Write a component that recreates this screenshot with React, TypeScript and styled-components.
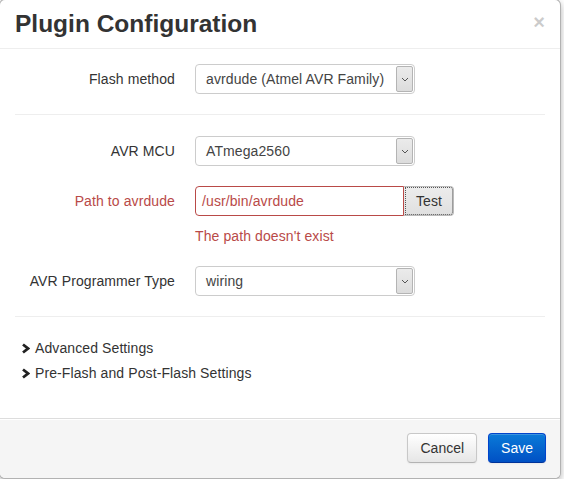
import React from "react";
import styled, { createGlobalStyle } from "styled-components";

const Global = createGlobalStyle`
  html, body { margin: 0; padding: 0; background: #ffffff; }
  body { font-family: "Liberation Sans", Arial, sans-serif; font-size: 14px; line-height: 20px; color: #333; }
  * { box-sizing: border-box; }
`;

const Modal = styled.div`
  width: 562px;
  margin-left: -1px;
  margin-top: -1px;
  background: #fff;
  border: 1px solid rgba(0, 0, 0, 0.3);
  border-radius: 6px;
  box-shadow: 0 3px 7px rgba(0, 0, 0, 0.3);
  overflow: hidden;
`;

const Header = styled.div`
  display: flex;
  justify-content: space-between;
  align-items: flex-start;
  padding: 4px 15px 4px;
  border-bottom: 1px solid #eee;
`;

const Title = styled.h3`
  margin: 0;
  font-size: 24.5px;
  line-height: 40px;
  font-weight: bold;
  color: #333;
`;

const Close = styled.span`
  margin-top: 8px;
  font-size: 20px;
  line-height: 20px;
  font-weight: bold;
  color: #000;
  opacity: 0.2;
`;

const Body = styled.div`
  display: flex;
  flex-direction: column;
  padding: 15px 15px 35px;
  letter-spacing: 0.1px;
`;

const Group = styled.div`
  display: grid;
  grid-template-columns: 160px 1fr;
  column-gap: 20px;
  margin-bottom: 20px;
`;

const Label = styled.label<{ $error?: boolean }>`
  padding-top: 5px;
  text-align: right;
  color: ${(p) => (p.$error ? "#b94a48" : "#333")};
`;

const Controls = styled.div`
  display: flex;
  flex-direction: column;
  align-items: flex-start;
`;

const Select = styled.div`
  width: 220px;
  height: 30px;
  display: flex;
  align-items: center;
  justify-content: space-between;
  border: 1px solid #ccc;
  border-radius: 4px;
  background: #fff;
  padding: 1px 1px 1px 10px;
  color: #444;
`;

const Arrow = styled.span`
  width: 17px;
  height: 100%;
  display: flex;
  align-items: center;
  justify-content: center;
  background: linear-gradient(#ebebeb, #dcdcdc);
  border: 1px solid #b4b4b4;
  border-radius: 2px;
`;

const Append = styled.div`
  display: flex;
`;

const Input = styled.div`
  width: 209px;
  height: 30px;
  padding: 4px 6px;
  border: 1px solid #b94a48;
  border-radius: 4px 0 0 4px;
  color: #b94a48;
  background: #fff;
`;

const AddonBtn = styled.div`
  width: 50px;
  height: 30px;
  display: flex;
  align-items: center;
  justify-content: center;
  padding-left: 1px;
  background: linear-gradient(#ececec, #e0e0e0);
  border: 1px solid #bbb;
  border-left: none;
  border-radius: 0 4px 4px 0;
  outline: 1px dotted #555;
  outline-offset: -2px;
  color: #333;
`;

const Help = styled.span`
  margin-top: 10px;
  color: #b94a48;
`;

const Hr = styled.hr`
  width: 100%;
  margin: 0 0 20px;
  border: 0;
  border-top: 1px solid #eee;
  border-bottom: 1px solid #fff;
`;

const Toggle = styled.div`
  display: flex;
  align-items: center;
  gap: 5px;
  padding-left: 6px;
  color: #333;
  & + & { margin-top: 5px; }
`;

const Footer = styled.div`
  display: flex;
  justify-content: flex-end;
  gap: 11px;
  padding: 14px 14px 15px 15px;
  background: #f5f5f5;
  border-top: 1px solid #ddd;
  box-shadow: inset 0 1px 0 #fff;
`;

const Button = styled.button<{ $primary?: boolean }>`
  height: 30px;
  padding: 4px 12px;
  font: inherit;
  font-size: 14px;
  line-height: 20px;
  border-radius: 4px;
  border: 1px solid ${(p) => (p.$primary ? "#0044cc" : "#c8c8c8")};
  border-bottom-color: ${(p) => (p.$primary ? "#003399" : "#b3b3b3")};
  color: ${(p) => (p.$primary ? "#fff" : "#333")};
  background: ${(p) =>
    p.$primary
      ? "linear-gradient(#0a7ad8, #0050c4)"
      : "linear-gradient(#ffffff, #e6e6e6)"};
  box-shadow: inset 0 1px 0 rgba(255, 255, 255, 0.2), 0 1px 2px rgba(0, 0, 0, 0.05);
`;

const ChevronDown = () => (
  <svg width="8" height="5" viewBox="0 0 8 5">
    <path d="M1 1 L4 4 L7 1" fill="none" stroke="#555" strokeWidth="1" />
  </svg>
);

const ChevronRight = () => (
  <svg width="9" height="11" viewBox="0 0 9 11">
    <path d="M2 1.5 L7 5.5 L2 9.5" fill="none" stroke="#222" strokeWidth="2.8" />
  </svg>
);

const FakeSelect = ({ value }: { value: string }) => (
  <Select>
    <span>{value}</span>
    <Arrow>
      <ChevronDown />
    </Arrow>
  </Select>
);

export default function App() {
  return (
    <>
      <Global />
      <Modal>
        <Header>
          <Title>Plugin Configuration</Title>
          <Close>×</Close>
        </Header>
        <Body>
          <Group>
            <Label>Flash method</Label>
            <Controls>
              <FakeSelect value="avrdude (Atmel AVR Family)" />
            </Controls>
          </Group>
          <Hr />
          <Group>
            <Label>AVR MCU</Label>
            <Controls>
              <FakeSelect value="ATmega2560" />
            </Controls>
          </Group>
          <Group>
            <Label $error>Path to avrdude</Label>
            <Controls>
              <Append>
                <Input>/usr/bin/avrdude</Input>
                <AddonBtn>Test</AddonBtn>
              </Append>
              <Help>The path doesn't exist</Help>
            </Controls>
          </Group>
          <Group>
            <Label>AVR Programmer Type</Label>
            <Controls>
              <FakeSelect value="wiring" />
            </Controls>
          </Group>
          <Hr />
          <Toggle>
            <ChevronRight />
            <span>Advanced Settings</span>
          </Toggle>
          <Toggle>
            <ChevronRight />
            <span>Pre-Flash and Post-Flash Settings</span>
          </Toggle>
        </Body>
        <Footer>
          <Button>Cancel</Button>
          <Button $primary>Save</Button>
        </Footer>
      </Modal>
    </>
  );
}
